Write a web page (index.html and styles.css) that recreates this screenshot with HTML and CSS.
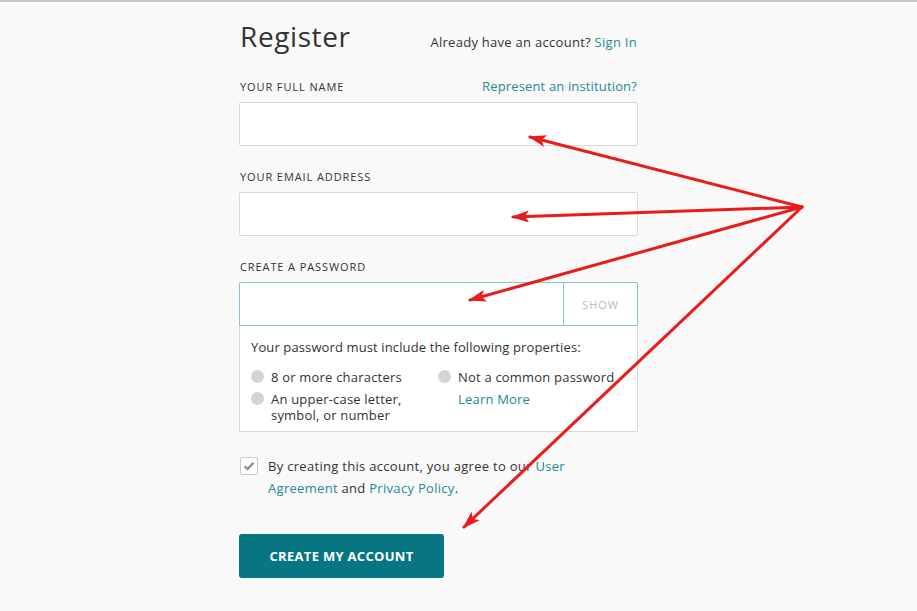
FILE: index.html
```html
<!DOCTYPE html>
<html lang="en">
<head>
<meta charset="utf-8">
<title>Register</title>
<link rel="stylesheet" href="styles.css">
</head>
<body>
<div class="page">
  <form class="register">
    <div class="head">
      <h1 class="title">Register</h1>
      <p class="signin">Already have an account? <a href="#" class="link">Sign In</a></p>
    </div>

    <div class="field">
      <div class="label-row">
        <label class="label">YOUR FULL NAME</label>
        <a href="#" class="link inst">Represent an institution?</a>
      </div>
      <div class="input"></div>
    </div>

    <div class="field">
      <div class="label-row">
        <label class="label">YOUR EMAIL ADDRESS</label>
      </div>
      <div class="input"></div>
    </div>

    <div class="field pw">
      <div class="label-row">
        <label class="label">CREATE A PASSWORD</label>
      </div>
      <div class="input pw-input">
        <div class="pw-text"></div>
        <div class="show">SHOW</div>
      </div>
      <div class="rules">
        <p class="rules-title">Your password must include the following properties:</p>
        <div class="rules-grid">
          <div class="rule"><span class="dot"></span><span>8 or more characters</span></div>
          <div class="rule"><span class="dot"></span><span>Not a common password</span></div>
          <div class="rule"><span class="dot"></span><span class="stack"><span>An upper-case letter,</span><span>symbol, or number</span></span></div>
          <div class="rule"><span class="nodot"></span><a href="#" class="link">Learn More</a></div>
        </div>
      </div>
    </div>

    <div class="agree">
      <span class="check">
        <svg width="12" height="10" viewBox="0 0 12 10"><path d="M1.5 5.2 L4.6 8 L10.5 1.8" fill="none" stroke="#8a8a8a" stroke-width="2.2"/></svg>
      </span>
      <p class="agree-text"><span class="line">By creating this account, you agree to our <a href="#" class="link">User</a></span><span class="line"><a href="#" class="link">Agreement</a> and <a href="#" class="link">Privacy Policy</a>.</span></p>
    </div>

    <button type="button" class="btn">CREATE MY ACCOUNT</button>
  </form>

  <svg class="arrows" width="917" height="611" viewBox="0 0 917 611">
    <defs>
      <marker id="ah" markerUnits="userSpaceOnUse" markerWidth="18" markerHeight="12" refX="16" refY="6" orient="auto">
        <path d="M0 0 L18 6 L0 12 L4 6 Z" fill="#ea1b1b"/>
      </marker>
    </defs>
    <g stroke="#ea1b1b" stroke-width="3" fill="none" stroke-linecap="round">
      <line x1="802" y1="207" x2="530" y2="137" marker-end="url(#ah)"/>
      <line x1="802" y1="207" x2="513" y2="217" marker-end="url(#ah)"/>
      <line x1="802" y1="207" x2="470" y2="300" marker-end="url(#ah)"/>
      <line x1="802" y1="207" x2="464" y2="527" marker-end="url(#ah)"/>
    </g>
  </svg>
</div>
</body>
</html>
```

FILE: styles.css
```css
* { box-sizing: border-box; }
html, body { margin: 0; padding: 0; }
body {
  background: #f9f9f9;
  font-family: "Open Sans", "Liberation Sans", sans-serif;
  color: #333;
  border-top: 2px solid #c9c9c9;
  height: 611px;
  overflow: hidden;
}
.page { position: relative; height: 609px; }
.register {
  width: 399px;
  margin-left: 239px;
  padding-top: 16px;
  display: flex;
  flex-direction: column;
}
.head {
  display: flex;
  justify-content: space-between;
  align-items: baseline;
  height: 36px;
  padding-left: 1px;
}
.title {
  margin: 0;
  font-weight: 400;
  font-size: 28px;
  line-height: 36px;
  color: #333;
  letter-spacing: 0.6px;
}
.signin {
  margin: 0;
  font-size: 13px;
  letter-spacing: 0.28px;
  color: #333;
  padding-right: 1px;
}
.link { color: #238a96; text-decoration: none; }
.field { display: flex; flex-direction: column; margin-top: 24px; }
.field + .field { margin-top: 22px; }
.label-row {
  display: flex;
  justify-content: space-between;
  align-items: center;
  height: 16px;
  margin-bottom: 8px;
  padding-left: 1px;
}
.label {
  font-size: 11px;
  letter-spacing: 0.9px;
  color: #333;
}
.inst { font-size: 13px; letter-spacing: 0.15px; padding-right: 1px; }
.input {
  height: 44px;
  background: #fff;
  border: 1px solid #d9d9d9;
  border-radius: 2px;
}
.pw-input {
  display: flex;
  border-color: #86c5cd;
  border-radius: 2px 2px 0 0;
}
.pw-text { flex: 1; }
.show {
  width: 74px;
  border-left: 1px solid #86c5cd;
  display: flex;
  align-items: center;
  justify-content: center;
  font-size: 11px;
  letter-spacing: 0.9px;
  color: #bbb;
}
.rules {
  background: #fff;
  border: 1px solid #d9d9d9;
  border-top: none;
  padding: 12px 11px 13px 11px;
  height: 106px;
}
.rules-title { margin: 0; font-size: 13px; line-height: 18px; letter-spacing: 0.12px; color: #333; }
.rules-grid {
  display: grid;
  grid-template-columns: 187px 1fr;
  row-gap: 6px;
  margin-top: 13px;
}
.rule {
  display: flex;
  align-items: flex-start;
  gap: 7px;
  font-size: 13px;
  line-height: 16px;
  letter-spacing: 0.2px;
  color: #333;
}
.stack { display: flex; flex-direction: column; }
.dot {
  width: 13px;
  height: 13px;
  border-radius: 50%;
  background: #d4d4d4;
  flex: none;
  margin-top: 1px;
}
.nodot { width: 13px; flex: none; }
.agree {
  display: flex;
  gap: 10px;
  margin-top: 26px;
  padding-left: 1px;
}
.check {
  width: 18px;
  height: 18px;
  border: 1px solid #c9c9c9;
  border-radius: 2px;
  background: #fff;
  display: flex;
  align-items: center;
  justify-content: center;
  flex: none;
  margin-top: -1px;
}
.agree-text {
  margin: 0;
  margin-top: -3px;
  font-size: 13px;
  line-height: 22px;
  letter-spacing: 0.3px;
  color: #333;
  display: flex;
  flex-direction: column;
}
.line { display: block; white-space: nowrap; }
.btn {
  margin-top: 35px;
  width: 205px;
  height: 44px;
  background: #087682;
  color: #fff;
  border: none;
  border-radius: 3px;
  font-family: "Open Sans", "Liberation Sans", sans-serif;
  font-weight: 700;
  font-size: 13px;
  letter-spacing: 0.3px;
  padding: 0;
}
.arrows { position: absolute; left: 0; top: -2px; pointer-events: none; }
```
